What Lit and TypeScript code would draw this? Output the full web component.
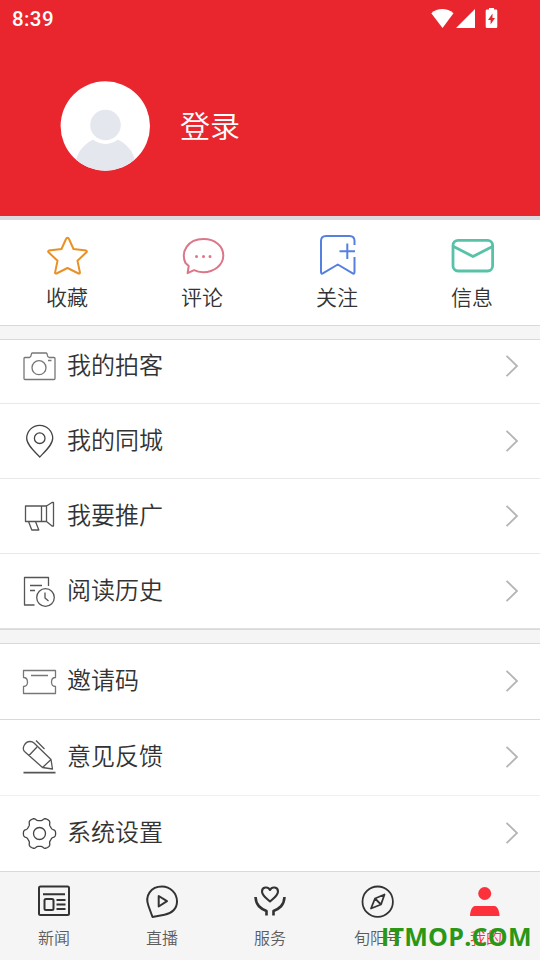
import { LitElement, html, svg, css } from "lit";
import { customElement } from "lit/decorators.js";

// Every glyph is drawn in page units so that 1 unit equals 1px.
const icon = (cls: string, w: number, h: number, body: unknown) =>
  html`<svg class="icon ${cls}" width=${w} height=${h} viewBox="0 0 ${w} ${h}" aria-hidden="true">${body}</svg>`;

// Six-toothed gear outline with softly flattened teeth.
const gear = (cx: number, cy: number) => {
  const pts: string[] = [];
  for (let i = 0; i < 180; i++) {
    const a = (i * Math.PI) / 90;
    const r = 14.5 + 1.7 * Math.tanh(1.8 * Math.cos(6 * a));
    pts.push(`${(cx + r * Math.cos(a)).toFixed(2)} ${(cy + r * Math.sin(a)).toFixed(2)}`);
  }
  return `M${pts.join("L")}z`;
};

const actions = [
  {
    label: "收藏",
    glyph: icon("star", 44, 42, svg`<path d="M21.500 3.800q1 0 1.500 1.200L27.500 15l12.700 1.600q1.300.6.2 1.700L31.500 26.700l2.500 12.200q-.2 1-1.500.6L21.500 34l-11 5.500q-1.300.4-1.500-.6L11.500 26.700 2.600 18.300q-1.100-1.100.2-1.700L15.500 15 20 5q.5-1.200 1.500-1.200z"/>`),
  },
  {
    label: "评论",
    glyph: icon("chat", 44, 42, svg`<path d="M4.500 29C-.5 18 6.500 5 22.500 5 34 5 42.300 12 42.300 21.500c0 9.700-9.500 16.700-20 16.700-4 0-7-.8-9.300-2l-6.400 3L7.700 32z"/><path class="dots" d="M15.500 22.500h.01M22.500 22.500h.01M29 22.500h.01"/>`),
  },
  {
    label: "关注",
    glyph: icon("mark", 44, 42, svg`<path d="M38.500 11V7q0-5-5-5H10Q5 2 5 7v31q0 2.500 2.200 1.200L21.800 30.500l14.500 8.700q2.200 1.300 2.200-1.200V23"/><path d="M23.500 17.300H39M31.300 9.500v15.500"/>`),
  },
  {
    label: "信息",
    glyph: icon("mail", 44, 42, svg`<rect x="2" y="6.400" width="39.600" height="30.600" rx="5"/><path d="M2.500 12.500L22 22.500 41.500 12.500"/>`),
  },
];

const groups = [
  {
    cls: "first",
    rows: [
      { label: "我的拍客", glyph: icon("soft", 36, 36, svg`<path d="M4 8.500h4.500q1.500-.5 2-3.700.3-.8 1-.8h13.500q.7 0 1 .8.500 3.200 2 3.700h5q1 0 1 1v20q0 1-1 1H4q-1 0-1-1v-20q0-1 1-1zM27 11.500h3.500"/><circle cx="18" cy="18.700" r="7"/>`) },
      { label: "我的同城", glyph: icon("bold", 36, 36, svg`<path d="M18.700 33C13 27 5.700 20.700 5.700 14.300a13 13 0 0 1 26 0C31.700 20.700 24.500 27 18.700 33z"/><circle cx="18.700" cy="14.200" r="5.300"/>`) },
      { label: "我要推广", glyph: icon("", 36, 36, svg`<path d="M4.500 7h21v15.500h-21zM20.500 7v15.500M25.500 7l5.500-3.500h1.500V27H31l-5.500-4.500M7.500 22.500l3.300 8.500h7l-3.300-8.500"/>`) },
      { label: "阅读历史", glyph: icon("", 36, 36, svg`<path d="M13.500 31H3.500V3.500h24V12M9 11.500h12M9 16.500h5"/><circle cx="24.500" cy="23.500" r="8.800"/><path d="M24 18.500V24l3.500 3"/>`) },
    ],
  },
  {
    cls: "second",
    rows: [
      { label: "邀请码", glyph: icon("soft", 36, 36, svg`<path d="M2.500 7.500h32v7q-4 0-4 4.500t4 4.500v7h-32v-7q4 0 4-4.500t-4-4.500zM10 12.500h17"/>`) },
      { label: "意见反馈", glyph: icon("", 36, 36, svg`<path d="M3.500 12.500C.5 9 4 2.500 9 2.500q2.500 0 4 1.500L30 20.500l1.500 9.500-10-1.500L3.500 12.500M8 16.500l8-8.500M21.500 28.500l8.500-8M15 1.500l8.500 8.500"/><path class="thick" d="M2.500 33.700h32"/>`) },
      { label: "系统设置", glyph: icon("bold", 36, 36, svg`<path d=${gear(18.5, 18.5)} /><circle cx="18.500" cy="18.500" r="6"/>`) },
    ],
  },
];

const tabs = [
  { label: "新闻", active: false, glyph: icon("", 36, 36, svg`<rect x="3" y="3.500" width="30" height="28.500" rx="1.500"/><path d="M7 11.300h22M20.500 17h9M20.500 21.500h9M20.500 26h9"/><rect x="8.500" y="16" width="9" height="11" rx="1.500"/>`) },
  { label: "直播", active: false, glyph: icon("", 36, 36, svg`<path d="M8.500 34L4.500 23C.5 12.500 7 3.500 18 3.500a15 15 0 0 1 15 15c0 7-5 12-12.500 13.300z"/><path d="M14.700 13v10.500L23 18.200z"/>`) },
  { label: "服务", active: false, glyph: icon("hands", 36, 36, svg`<path class="heart" d="M18 18.500C14 15 10 12.500 10 8.500c0-4.500 6-5.500 8-1.500 2-4 8-3 8 1.500 0 4-4 6.500-8 10z"/><path d="M3.500 14c.5 8.500 5 11.500 11 14v4.500M32.500 14c-.5 8.500-5 11.500-11 14v4.500"/>`) },
  { label: "旬阳号", active: false, glyph: icon("compass", 36, 36, svg`<circle cx="17.700" cy="18.700" r="15.200"/><path d="M24.500 11.500l-3.500 10L11 25.500l4-10zM15 15.500l6 6"/>`) },
  { label: "我的", active: true, glyph: icon("person", 36, 36, svg`<circle cx="16.700" cy="10.500" r="6.500"/><path d="M7 23h19.500c3 0 5 5.500 5 10H2c0-4.500 2-10 5-10z"/>`) },
];

@customElement("app-root")
export class AppRoot extends LitElement {
  static styles = css`
    :host {
      position: relative;
      display: flex;
      flex-direction: column;
      width: 540px;
      height: 960px;
      overflow: hidden;
      background: #fff;
      color: #333;
      font-family: "Noto Sans CJK SC", sans-serif;
      font-weight: 350;
    }
    * { box-sizing: border-box; }
    svg { display: block; flex: none; }
    .icon { fill: none; stroke: #555; stroke-width: 1.3; stroke-linejoin: round; }
    .header { height: 220px; background: #e9262d; border-bottom: 4px solid #d9d9de; color: #fff; }
    .status {
      display: flex; align-items: center; justify-content: space-between;
      height: 36px; padding: 1px 41px 0 12px;
      font: 500 20.500px/36px Roboto, sans-serif; letter-spacing: 0.4px;
    }
    .profile { display: flex; align-items: center; gap: 30px; height: 90px; margin: 45px 0 0 60px; font-size: 30px; }
    .name { padding-bottom: 5px; }
    .actions { display: flex; height: 105px; flex: none; }
    .action {
      flex: 1; display: flex; flex-direction: column; align-items: center;
      padding: 14px 1px 0 0; font-size: 21px; line-height: 30px; gap: 5px;
    }
    .action .icon { margin-left: 2px; }
    .star { stroke: #e99127; stroke-width: 2; }
    .chat { stroke: #dc7688; stroke-width: 2; }
    .chat .dots { stroke-width: 3; stroke-linecap: round; }
    .mark { stroke: #5580e0; stroke-width: 2; }
    .mail { stroke: #58c2a8; stroke-width: 2.800; }
    .gap { flex: none; height: 15px; background: #f5f5f5; border: solid #d9d9d9; border-width: 1px 0; }
    .row {
      display: flex; align-items: center; gap: 10px; height: 75px;
      padding: 0 20px 0 21px; border-bottom: 1px solid #e9e9e9;
      font-size: 24px; line-height: 36px;
    }
    .label { flex: 1; padding-bottom: 4px; }
    .first .icon { margin-top: 1px; }
    .first .row:first-child { height: 64px; padding-bottom: 11px; }
    .first .row:last-child { border-bottom-color: #e0e0e0; }
    .second .row { height: 76px; padding-bottom: 2px; border-bottom-color: #f0f0f0; }
    .second .row:first-child { border-bottom-color: #d9d9d9; }
    .second .row:last-child { height: 75px; border: 0; }
    .soft { stroke: #777; }
    .bold { stroke: #444; }
    .thick { stroke-width: 1.800; }
    .chevron { fill: none; stroke: #b5b5b5; stroke-width: 1.800; }
    .tabs { display: flex; height: 89px; border-top: 1px solid #d9d9d9; background: #f5f5f5; }
    .tab {
      flex: 1; display: flex; flex-direction: column; align-items: center;
      padding-top: 11px; gap: 6px; font-size: 16px; line-height: 24px; color: #5c5c5c;
    }
    .tab .icon { stroke: #333; stroke-width: 2; }
    .tab .hands { stroke-width: 2.600; }
    .tab .heart { stroke-width: 2.100; }
    .tab .compass { stroke-width: 1.800; }
    .tab .person { fill: #fd313b; stroke: none; }
    .tab.active { color: #fd313b; }
    .watermark {
      position: absolute; left: 381px; top: 918px;
      font: 700 25px/36px "Open Sans", sans-serif; letter-spacing: 0.25px; color: #2a9716; white-space: nowrap;
    }
  `;

  render() {
    return html`
      <header class="header">
        <div class="status">
          <span>8:39</span>
          <svg width="70" height="22" viewBox="0 0 70 22" fill="#fff">
            <path d="M2.300 5.300C8.500-.3 18-.3 24.500 5.300L13.500 20z"/>
            <path d="M27 20L46 1v19z"/>
            <path fill-rule="evenodd" d="M60 0h5v1.500h2q1.300 0 1.300 1.300v15.900q0 1.300-1.300 1.300h-9q-1.300 0-1.300-1.300V2.800q0-1.300 1.300-1.300h2zM63.500 5.500l-4.500 6.500h2.600v4.500l4.400-6.500h-2.500z"/>
          </svg>
        </div>
        <div class="profile">
          <svg width="90" height="90" viewBox="0 0 90 90">
            <defs><clipPath id="disc"><circle cx="45.300" cy="45" r="44.700"/></clipPath></defs>
            <g clip-path="url(#disc)">
              <path fill="#fff" d="M0 0h90v90H0z"/>
              <circle cx="45.500" cy="86.500" r="30.500" fill="#e4e7ee"/>
              <circle cx="45.500" cy="44" r="19" fill="#fff"/>
              <circle cx="45.500" cy="44" r="15.300" fill="#e4e7ee"/>
            </g>
          </svg>
          <span class="name">登录</span>
        </div>
      </header>
      <nav class="actions">
        ${actions.map((a) => html`<div class="action">${a.glyph}<span>${a.label}</span></div>`)}
      </nav>
      ${groups.map((g) => html`
        <div class="gap"></div>
        <section class=${g.cls}>
          ${g.rows.map((r) => html`
            <div class="row">
              ${r.glyph}<span class="label">${r.label}</span>
              <svg class="chevron" width="16" height="24" viewBox="0 0 16 24"><path d="M2.500 1.800L13 12 2.500 22.200"/></svg>
            </div>`)}
        </section>`)}
      <footer class="tabs">
        ${tabs.map((t) => html`<div class="tab ${t.active ? "active" : ""}">${t.glyph}<span>${t.label}</span></div>`)}
      </footer>
      <div class="watermark">ITMOP.COM</div>
    `;
  }
}
